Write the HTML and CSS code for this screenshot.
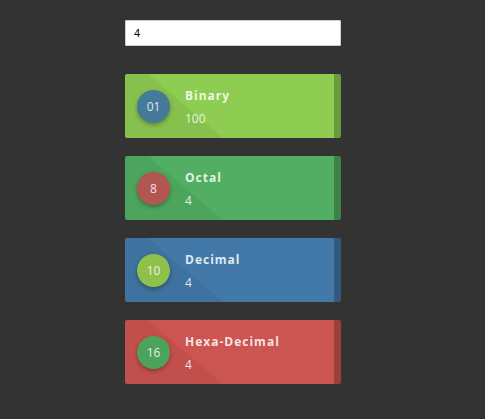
FILE: index.html
```html
<!DOCTYPE html>
<html>
<head>
<meta charset="utf-8">
<link rel="stylesheet" href="styles.css">
</head>
<body>
<div class="wrap">
  <input class="num-input" type="text" value="4">
  <div class="cards">
    <div class="card card-bin">
      <div class="shade"></div>
      <div class="badge badge-bin">01</div>
      <div class="info"><div class="title">Binary</div><div class="value">100</div></div>
    </div>
    <div class="card card-oct">
      <div class="shade"></div>
      <div class="badge badge-oct">8</div>
      <div class="info"><div class="title">Octal</div><div class="value">4</div></div>
    </div>
    <div class="card card-dec">
      <div class="shade"></div>
      <div class="badge badge-dec">10</div>
      <div class="info"><div class="title">Decimal</div><div class="value">4</div></div>
    </div>
    <div class="card card-hex">
      <div class="shade"></div>
      <div class="badge badge-hex">16</div>
      <div class="info"><div class="title">Hexa-Decimal</div><div class="value">4</div></div>
    </div>
  </div>
</div>
</body>
</html>
```
FILE: styles.css
```css
html, body { margin: 0; padding: 0; background: #333333; }
body { width: 485px; height: 419px; overflow: hidden; font-family: "Open Sans", "DejaVu Sans", sans-serif; }
.wrap { margin-left: 125px; width: 216px; padding-top: 20px; }
.num-input {
  display: block; box-sizing: border-box; width: 216px; height: 26px;
  border: 1px solid #cfcfcf; border-radius: 1px; background: #fff;
  padding: 0 8px; font-family: "Liberation Sans", Arial, sans-serif; font-size: 11px; color: #000;
  outline: none;
}
.cards { display: flex; flex-direction: column; gap: 18px; margin-top: 28px; }
.card {
  position: relative; box-sizing: border-box; height: 64px; border-radius: 2px;
  display: flex; align-items: center; padding-left: 12px; overflow: hidden;
  border-right: 7px solid rgba(0,0,0,0.25);
}
.shade {
  position: absolute; left: 0; top: 0; bottom: 0; width: 100px;
  background: rgba(0,0,0,0.05);
  clip-path: polygon(0 0, 23px 0, 98px 100%, 0 100%);
}
.card-bin { background: #8fcc52; }
.card-oct { background: #52ae62; }
.card-dec { background: #4279a8; }
.card-hex { background: #cc5551; }
.badge {
  position: relative; width: 33px; height: 33px; border-radius: 50%;
  display: flex; align-items: center; justify-content: center;
  color: rgba(255,255,255,0.85); font-size: 12px;
  box-shadow: 0 2px 4px rgba(0,0,0,0.3); flex: none;
}
.badge-bin { background: #457a99; }
.badge-oct { background: #b25651; }
.badge-dec { background: #8ec04c; }
.badge-hex { background: #4ea35b; }
.info { position: relative; margin-left: 15px; color: rgba(255,255,255,0.85); display: flex; flex-direction: column; gap: 7px; margin-top: 3px; }
.title { font-weight: bold; font-size: 12px; letter-spacing: 1px; line-height: 16px; }
.value { font-size: 12px; line-height: 16px; }
```
